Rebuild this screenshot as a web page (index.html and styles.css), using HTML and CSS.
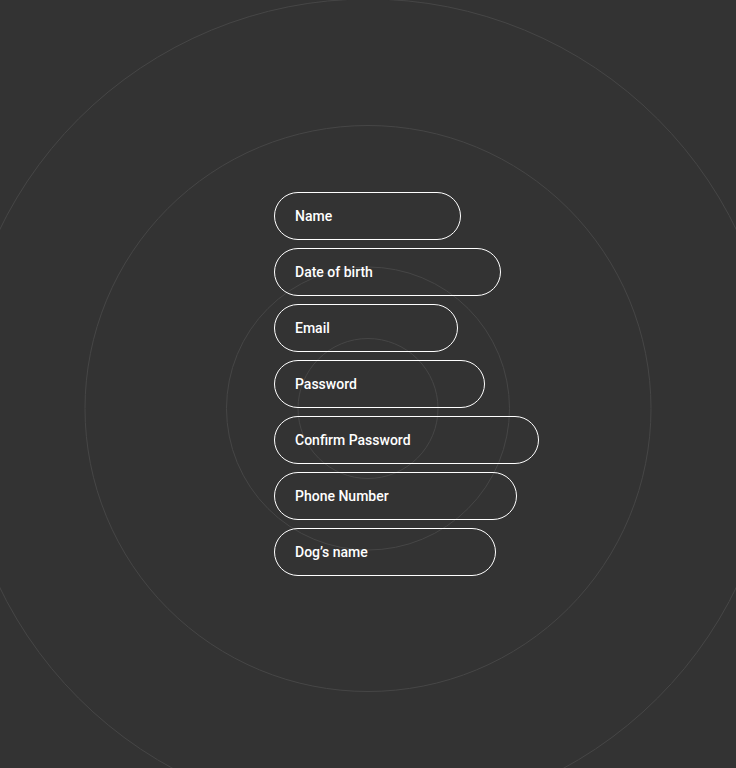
FILE: index.html
```html
<!DOCTYPE html>
<html lang="en">
<head>
<meta charset="utf-8">
<title>Sign up</title>
<link rel="stylesheet" href="styles.css">
</head>
<body>
<svg class="rings" width="736" height="768" viewBox="0 0 736 768" aria-hidden="true">
  <g fill="none" stroke="#464646" stroke-width="1">
    <circle cx="368" cy="408.5" r="70"/>
    <circle cx="368" cy="408.5" r="141.5"/>
    <circle cx="368" cy="408.5" r="283"/>
    <circle cx="368" cy="408.5" r="409.5"/>
  </g>
</svg>
<form class="form">
  <div class="pill">Name</div>
  <div class="pill">Date of birth</div>
  <div class="pill">Email</div>
  <div class="pill">Password</div>
  <div class="pill">Confirm Password</div>
  <div class="pill">Phone Number</div>
  <div class="pill">Dog’s name</div>
</form>
</body>
</html>
```
FILE: styles.css
```css
html, body {
  margin: 0;
  padding: 0;
}
body {
  background: #333333;
  width: 736px;
  height: 768px;
  overflow: hidden;
  position: relative;
  display: flex;
  justify-content: center;
  font-family: Roboto, "Liberation Sans", sans-serif;
}
.rings {
  position: absolute;
  left: 0;
  top: 0;
}
.form {
  position: relative;
  width: 188px;
  margin: 0;
  padding-top: 192px;
  display: flex;
  flex-direction: column;
  align-items: flex-start;
  gap: 8px;
}
.pill {
  box-sizing: border-box;
  height: 48px;
  width: max-content;
  white-space: nowrap;
  border: 1px solid #ffffff;
  border-radius: 24px;
  padding: 0 127.5px 0 20px;
  display: flex;
  align-items: center;
  color: #ffffff;
  font-size: 14px;
  font-weight: 500;
}
```
